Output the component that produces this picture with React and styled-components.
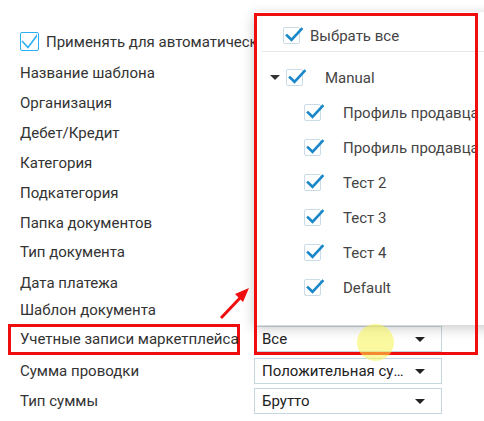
import React from 'react';
import styled, { createGlobalStyle } from 'styled-components';

const GlobalStyle = createGlobalStyle`
  html, body { margin: 0; padding: 0; background: #fff; overflow: hidden; }
  body { font-family: Roboto, "Noto Sans", "Liberation Sans", sans-serif; }
`;

const Page = styled.div`
  position: relative;
  width: 484px;
  height: 421px;
  overflow: hidden;
  background: #fff;
`;

const Form = styled.div`
  display: flex;
  flex-direction: column;
  padding: 25px 0 0 20px;
`;

const Row = styled.div`
  display: grid;
  grid-template-columns: 234px 188px;
  align-items: center;
  height: ${p => p.h}px;
`;

const Label = styled.div`
  font-size: 15px;
  color: #333;
  white-space: nowrap;
  ${p => p.highlight && `
    box-sizing: border-box;
    margin-left: -12px;
    padding-left: 9px;
    width: 232px;
    height: 31px;
    display: flex;
    align-items: center;
    border: 3px solid #f00d0d;
  `}
`;

const CheckLabel = styled.label`
  display: flex;
  align-items: center;
  gap: 7px;
  font-size: 15px;
  color: #333;
  white-space: nowrap;
`;

const BigBox = styled.span`
  box-sizing: border-box;
  width: 19px;
  height: 19px;
  border: 1.5px solid #2aaff5;
  border-radius: 2px;
  display: inline-flex;
  flex-shrink: 0;
  svg { display: block; }
`;

const Select = styled.div`
  box-sizing: border-box;
  width: 188px;
  height: 26px;
  border: 1px solid #c4d6df;
  background: #fff;
  display: flex;
  align-items: center;
  padding: 0 16px 0 7px;
  font-size: 15px;
  color: #222;
`;

const SelectText = styled.span`
  flex: 1;
  min-width: 0;
  overflow: hidden;
  white-space: nowrap;
  text-overflow: ellipsis;
  margin-right: 3px;
`;

const Caret = styled.span`
  width: 0;
  height: 0;
  border-left: 5px solid transparent;
  border-right: 5px solid transparent;
  border-top: 5px solid ${p => p.color || '#222'};
  flex-shrink: 0;
`;

const Dropdown = styled.div`
  position: absolute;
  left: 254px;
  top: 12px;
  width: 250px;
  height: 313px;
  background: #fff;
  box-shadow: 0 3px 12px rgba(0, 0, 0, 0.22);
  display: flex;
  flex-direction: column;
`;

const DropHeader = styled.div`
  box-sizing: border-box;
  display: flex;
  align-items: center;
  gap: 10px;
  height: 40px;
  padding: 8px 0 0 21px;
  margin-left: 8px;
  font-size: 15px;
  color: #444;
  border-bottom: 1px solid #e6e6e6;
`;

const List = styled.div`
  height: 262px;
  overflow: hidden;
  padding-top: 8px;
  box-sizing: border-box;
`;

const Item = styled.div`
  display: flex;
  align-items: center;
  height: 35px;
  padding-left: ${p => p.indent}px;
  font-size: 15px;
  color: #444;
  white-space: nowrap;
`;

const Toggle = styled.span`
  width: 21px;
  display: inline-flex;
  justify-content: center;
  margin-right: 1px;
`;

const Box = styled.span`
  box-sizing: border-box;
  position: relative;
  width: 17px;
  height: 17px;
  border: 1px solid #c9dce8;
  border-radius: 2px;
  flex-shrink: 0;
  margin-right: ${p => p.gap}px;
  svg { position: absolute; left: -1px; top: -1px; overflow: visible; }
`;

const Frame = styled.div`
  position: absolute;
  left: 254px;
  top: 13px;
  width: 224px;
  height: 342px;
  box-sizing: border-box;
  border: 3px solid #f00d0d;
  pointer-events: none;
`;

const Arrow = styled.svg`
  position: absolute;
  left: 215px;
  top: 284px;
`;

const Halo = styled.div`
  position: absolute;
  left: 357px;
  top: 324px;
  width: 37px;
  height: 37px;
  border-radius: 50%;
  background: rgba(248, 244, 80, 0.55);
`;

const Check = ({ gap }) => (
  <Box gap={gap}>
    <svg width="19" height="17" viewBox="0 0 19 17">
      <path d="M4 8.5 L8.5 12.8 L18.5 2" fill="none" stroke="#1a87c9" strokeWidth="2.6" strokeLinecap="square" />
    </svg>
  </Box>
);

const rows = [
  ['Название шаблона', 30],
  ['Организация', 30],
  ['Дебет/Кредит', 30],
  ['Категория', 30],
  ['Подкатегория', 30],
  ['Папка документов', 29],
  ['Тип документа', 30],
  ['Дата платежа', 31],
  ['Шаблон документа', 24],
];

const items = ['Профиль продавца', 'Профиль продавца', 'Тест 2', 'Тест 3', 'Тест 4', 'Default', 'Тест 5'];

export default function App() {
  return (
    <Page>
      <GlobalStyle />
      <Form>
        <Row h={33}>
          <CheckLabel>
            <BigBox>
              <svg width="16" height="16" viewBox="0 0 16 16">
                <path d="M1 8 L7 14.5 L17 1" fill="none" stroke="#2aaff5" strokeWidth="1.6" />
              </svg>
            </BigBox>
            Применять для автоматического создания проводок
          </CheckLabel>
        </Row>
        {rows.map(([t, h]) => (
          <Row key={t} h={h}>
            <Label>{t}</Label>
          </Row>
        ))}
        <Row h={34}>
          <Label highlight>Учетные записи маркетплейса</Label>
          <Select><SelectText>Все</SelectText><Caret /></Select>
        </Row>
        <Row h={30}>
          <Label>Сумма проводки</Label>
          <Select><SelectText>Положительная сумма</SelectText><Caret /></Select>
        </Row>
        <Row h={30}>
          <Label>Тип суммы</Label>
          <Select><SelectText>Брутто</SelectText><Caret /></Select>
        </Row>
      </Form>

      <Dropdown>
        <DropHeader>
          <Check gap={0} />
          Выбрать все
        </DropHeader>
        <List>
          <Item indent={10}>
            <Toggle><Caret color="#333" /></Toggle>
            <Check gap={22} />
            Manual
          </Item>
          {items.map((t, i) => (
            <Item key={i} indent={50}>
              <Check gap={22} />
              {t}
            </Item>
          ))}
        </List>
      </Dropdown>

      <Frame />
      <Arrow width="40" height="40" viewBox="0 0 40 40">
        <line x1="6" y1="34" x2="26" y2="13" stroke="#f00d0d" strokeWidth="3" />
        <polygon points="34,4 20,10 28,18" fill="#f00d0d" />
      </Arrow>
      <Halo />
    </Page>
  );
}
